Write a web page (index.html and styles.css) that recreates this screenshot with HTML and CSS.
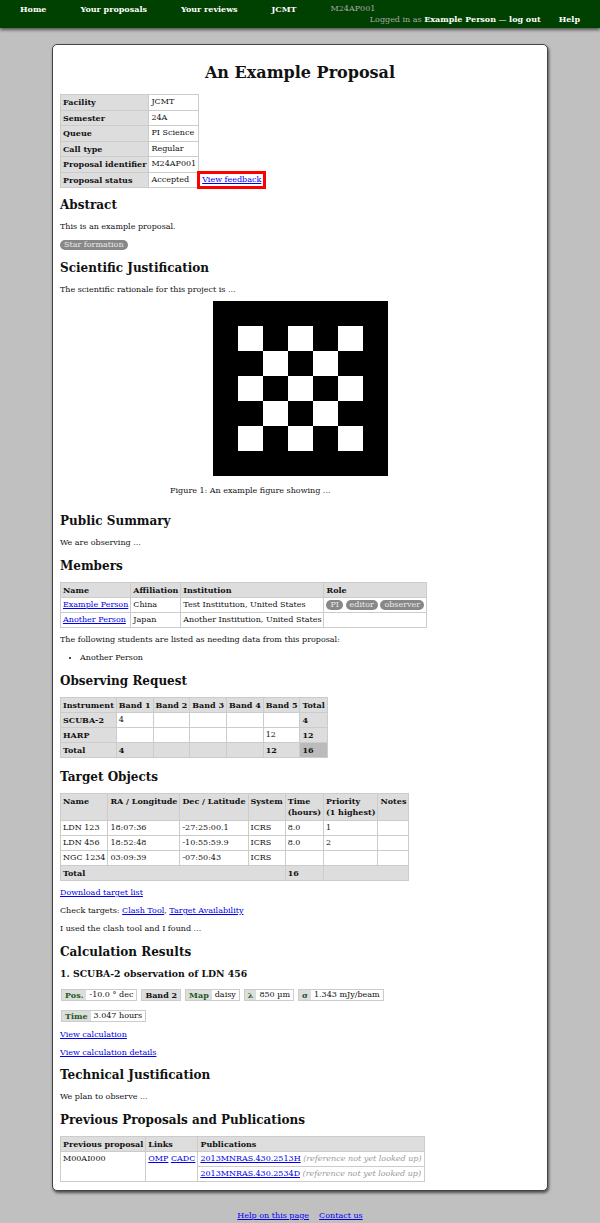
FILE: index.html
```html
<!DOCTYPE html>
<html lang="en">
<head>
<meta charset="utf-8">
<title>An Example Proposal</title>
<link rel="stylesheet" href="styles.css">
</head>
<body>
<nav class="topnav">
  <div class="nav-row">
    <a class="nav-link" href="#">Home</a>
    <a class="nav-link" href="#">Your proposals</a>
    <a class="nav-link" href="#">Your reviews</a>
    <a class="nav-link" href="#">JCMT</a>
    <span class="nav-ident">M24AP001</span>
  </div>
  <div class="nav-row nav-row-right">
    <span class="nav-user"><span class="dim">Logged in as</span> <b>Example Person</b> — <a class="nav-link" href="#">log out</a></span>
    <a class="nav-link" href="#">Help</a>
  </div>
</nav>

<main class="card">
  <h1>An Example Proposal</h1>

  <table class="grid info">
    <tr><th>Facility</th><td>JCMT</td></tr>
    <tr><th>Semester</th><td>24A</td></tr>
    <tr><th>Queue</th><td>PI Science</td></tr>
    <tr><th>Call type</th><td>Regular</td></tr>
    <tr><th>Proposal identifier</th><td>M24AP001</td></tr>
    <tr><th>Proposal status</th><td>Accepted</td><td class="feedback-cell"><span class="feedback"><a href="#">View feedback</a></span></td></tr>
  </table>

  <h2>Abstract</h2>
  <p>This is an example proposal.</p>
  <div class="tags"><span class="pill">Star formation</span></div>

  <h2>Scientific Justification</h2>
  <p>The scientific rationale for this project is ...</p>
  <figure class="figure">
    <div class="figure-img">
      <svg width="175" height="175" viewBox="0 0 7 7" shape-rendering="crispEdges">
        <rect x="0" y="0" width="7" height="7" fill="#000"/>
        <g fill="#fff">
          <rect x="1" y="1" width="1" height="1"/><rect x="3" y="1" width="1" height="1"/><rect x="5" y="1" width="1" height="1"/>
          <rect x="2" y="2" width="1" height="1"/><rect x="4" y="2" width="1" height="1"/>
          <rect x="1" y="3" width="1" height="1"/><rect x="3" y="3" width="1" height="1"/><rect x="5" y="3" width="1" height="1"/>
          <rect x="2" y="4" width="1" height="1"/><rect x="4" y="4" width="1" height="1"/>
          <rect x="1" y="5" width="1" height="1"/><rect x="3" y="5" width="1" height="1"/><rect x="5" y="5" width="1" height="1"/>
        </g>
      </svg>
    </div>
    <figcaption>Figure 1: An example figure showing ...</figcaption>
  </figure>

  <h2>Public Summary</h2>
  <p>We are observing ...</p>

  <h2>Members</h2>
  <table class="grid data">
    <tr><th>Name</th><th>Affiliation</th><th>Institution</th><th>Role</th></tr>
    <tr><td><a href="#">Example Person</a></td><td>China</td><td>Test Institution, United States</td><td><span class="pill">PI</span> <span class="pill">editor</span> <span class="pill">observer</span></td></tr>
    <tr><td><a href="#">Another Person</a></td><td>Japan</td><td>Another Institution, United States</td><td></td></tr>
  </table>
  <p>The following students are listed as needing data from this proposal:</p>
  <ul class="list">
    <li>Another Person</li>
  </ul>

  <h2>Observing Request</h2>
  <table class="grid data obs">
    <tr><th>Instrument</th><th>Band 1</th><th>Band 2</th><th>Band 3</th><th>Band 4</th><th>Band 5</th><th>Total</th></tr>
    <tr><th>SCUBA-2</th><td>4</td><td></td><td></td><td></td><td></td><th>4</th></tr>
    <tr><th>HARP</th><td></td><td></td><td></td><td></td><td>12</td><th>12</th></tr>
    <tr><th>Total</th><th>4</th><th></th><th></th><th></th><th>12</th><th class="grand">16</th></tr>
  </table>

  <h2>Target Objects</h2>
  <table class="grid data">
    <tr class="tall"><th>Name</th><th>RA / Longitude</th><th>Dec / Latitude</th><th>System</th><th>Time<br>(hours)</th><th>Priority<br>(1 highest)</th><th>Notes</th></tr>
    <tr><td>LDN 123</td><td>18:07:36</td><td>-27:25:00.1</td><td>ICRS</td><td>8.0</td><td>1</td><td></td></tr>
    <tr><td>LDN 456</td><td>18:52:48</td><td>-10:55:59.9</td><td>ICRS</td><td>8.0</td><td>2</td><td></td></tr>
    <tr><td>NGC 1234</td><td>03:09:39</td><td>-07:50:43</td><td>ICRS</td><td></td><td></td><td></td></tr>
    <tr><th colspan="4">Total</th><th>16</th><th colspan="2"></th></tr>
  </table>
  <p><a href="#">Download target list</a></p>
  <p>Check targets: <a href="#">Clash Tool</a>, <a href="#">Target Availability</a></p>
  <p>I used the clash tool and I found ...</p>

  <h2>Calculation Results</h2>
  <h3>1. SCUBA-2 observation of LDN 456</h3>
  <div class="calc-row">
    <span class="badge"><span class="k">Pos.</span><span class="v">-10.0 ° dec</span></span>
    <span class="badge"><span class="k plain">Band 2</span></span>
    <span class="badge"><span class="k">Map</span><span class="v">daisy</span></span>
    <span class="badge"><span class="k">λ</span><span class="v">850 µm</span></span>
    <span class="badge"><span class="k">σ</span><span class="v">1.343 mJy/beam</span></span>
  </div>
  <div class="calc-row">
    <span class="badge"><span class="k">Time</span><span class="v">3.047 hours</span></span>
  </div>
  <p><a href="#">View calculation</a></p>
  <p><a href="#">View calculation details</a></p>

  <h2>Technical Justification</h2>
  <p>We plan to observe ...</p>

  <h2>Previous Proposals and Publications</h2>
  <table class="grid data">
    <tr><th>Previous proposal</th><th>Links</th><th>Publications</th></tr>
    <tr><td rowspan="2" class="top">M00AI000</td><td rowspan="2" class="top"><a href="#">OMP</a> <a href="#">CADC</a></td><td><a href="#">2013MNRAS.430.2513H</a> <span class="note">(reference not yet looked up)</span></td></tr>
    <tr><td><a href="#">2013MNRAS.430.2534D</a> <span class="note">(reference not yet looked up)</span></td></tr>
  </table>
</main>

<footer class="footer">
  <a href="#">Help on this page</a>
  <a href="#">Contact us</a>
</footer>
</body>
</html>
```

FILE: styles.css
```css
html, body {
  margin: 0;
  padding: 0;
}
body {
  background: #c0c0c0;
  font-family: "DejaVu Serif", "Liberation Serif", serif;
  font-size: 8px;
  line-height: 10.5px;
  color: #111;
}
a {
  color: #0000ee;
}

/* top navigation */
.topnav {
  background: #004000;
  height: 28px;
  box-sizing: border-box;
  padding: 4px 20px 4px 20px;
  box-shadow: 0 2px 3px rgba(0, 0, 0, 0.55);
  line-height: 10px;
}
.nav-row {
  display: flex;
  gap: 34px;
}
.nav-row-right {
  justify-content: flex-end;
  gap: 18px;
}
.nav-link {
  color: #fff;
  font-weight: bold;
  text-decoration: none;
}
.nav-ident {
  color: #aaa;
}
.nav-user {
  color: #fff;
}
.nav-user b {
  font-weight: bold;
}
.dim {
  color: #aaa;
}

/* main card */
.card {
  margin: 16px 52px 0 52px;
  box-sizing: border-box;
  background: #fff;
  border: 1px solid #444;
  border-radius: 5px;
  box-shadow: 1px 2px 3px rgba(0, 0, 0, 0.6);
  padding: 7px 7px 8px 7px;
}
.card h1 {
  font-size: 16px;
  line-height: 18px;
  text-align: center;
  margin: 12px 0;
}
.card h2 {
  font-size: 12px;
  line-height: 12px;
  margin: 11px 0;
}
.card h3 {
  font-size: 9.3px;
  line-height: 10px;
  margin: 11px 0 10px 0;
}
.card p {
  margin: 7.5px 0;
}

/* tables */
.grid {
  border-collapse: collapse;
  border: 1px solid #ccc;
}
.grid th,
.grid td {
  border: 1px solid #ccc;
  padding: 2px 2px;
  text-align: left;
  vertical-align: top;
}
.grid th {
  background: #ddd;
  font-weight: bold;
}
.grid td {
  background: #fff;
}
.grid.data {
  margin-top: -1px;
}
.grid.data td,
.grid.data th {
  line-height: 10px;
}
.grid.data tr.tall th {
  line-height: 11px;
}
.grid.obs {
  margin-bottom: 13px;
}
.grid th.grand {
  background: #bbb;
}
.grid td.top {
  vertical-align: top;
}
.grid.info {
  border: none;
}
.info td.feedback-cell {
  border: none;
  background: transparent;
  padding: 0;
  vertical-align: middle;
}
.feedback {
  display: inline-block;
  border: 3px solid #ff0000;
  background: #fff;
  padding: 1px 2px;
  margin: -3px 0 -3px -2px;
  line-height: 10px;
}

/* pills */
.tags {
  margin: 7.5px 0;
}
.pill {
  display: inline-block;
  background: #888;
  color: #e8e8e8;
  border-radius: 5px;
  padding: 0 4px;
  line-height: 10px;
}

/* figure */
.figure {
  margin: -2px 0 19px 0;
}
.figure-img {
  display: flex;
  justify-content: center;
}
.figure-img svg {
  display: block;
}
.figure figcaption {
  margin: 10px 0 0 110px;
}

/* list */
.list {
  margin: 7.5px 0;
  padding-left: 20px;
}

/* calculation badges */
.calc-row {
  display: flex;
  gap: 4px;
  margin: 9px 0 8px 1px;
}
.badge {
  display: flex;
  border: 1px solid #ccc;
  line-height: 10px;
}
.badge .k {
  background: #ddd;
  color: #1a5a1a;
  font-weight: bold;
  padding: 0 3px;
}
.badge .k.plain {
  color: #111;
}
.badge .v {
  padding: 0 3px;
}

.note {
  color: #999;
  font-style: italic;
}

/* footer */
.footer {
  display: flex;
  justify-content: center;
  gap: 10px;
  margin: 20px 0 0 0;
  padding-bottom: 10px;
}
```
